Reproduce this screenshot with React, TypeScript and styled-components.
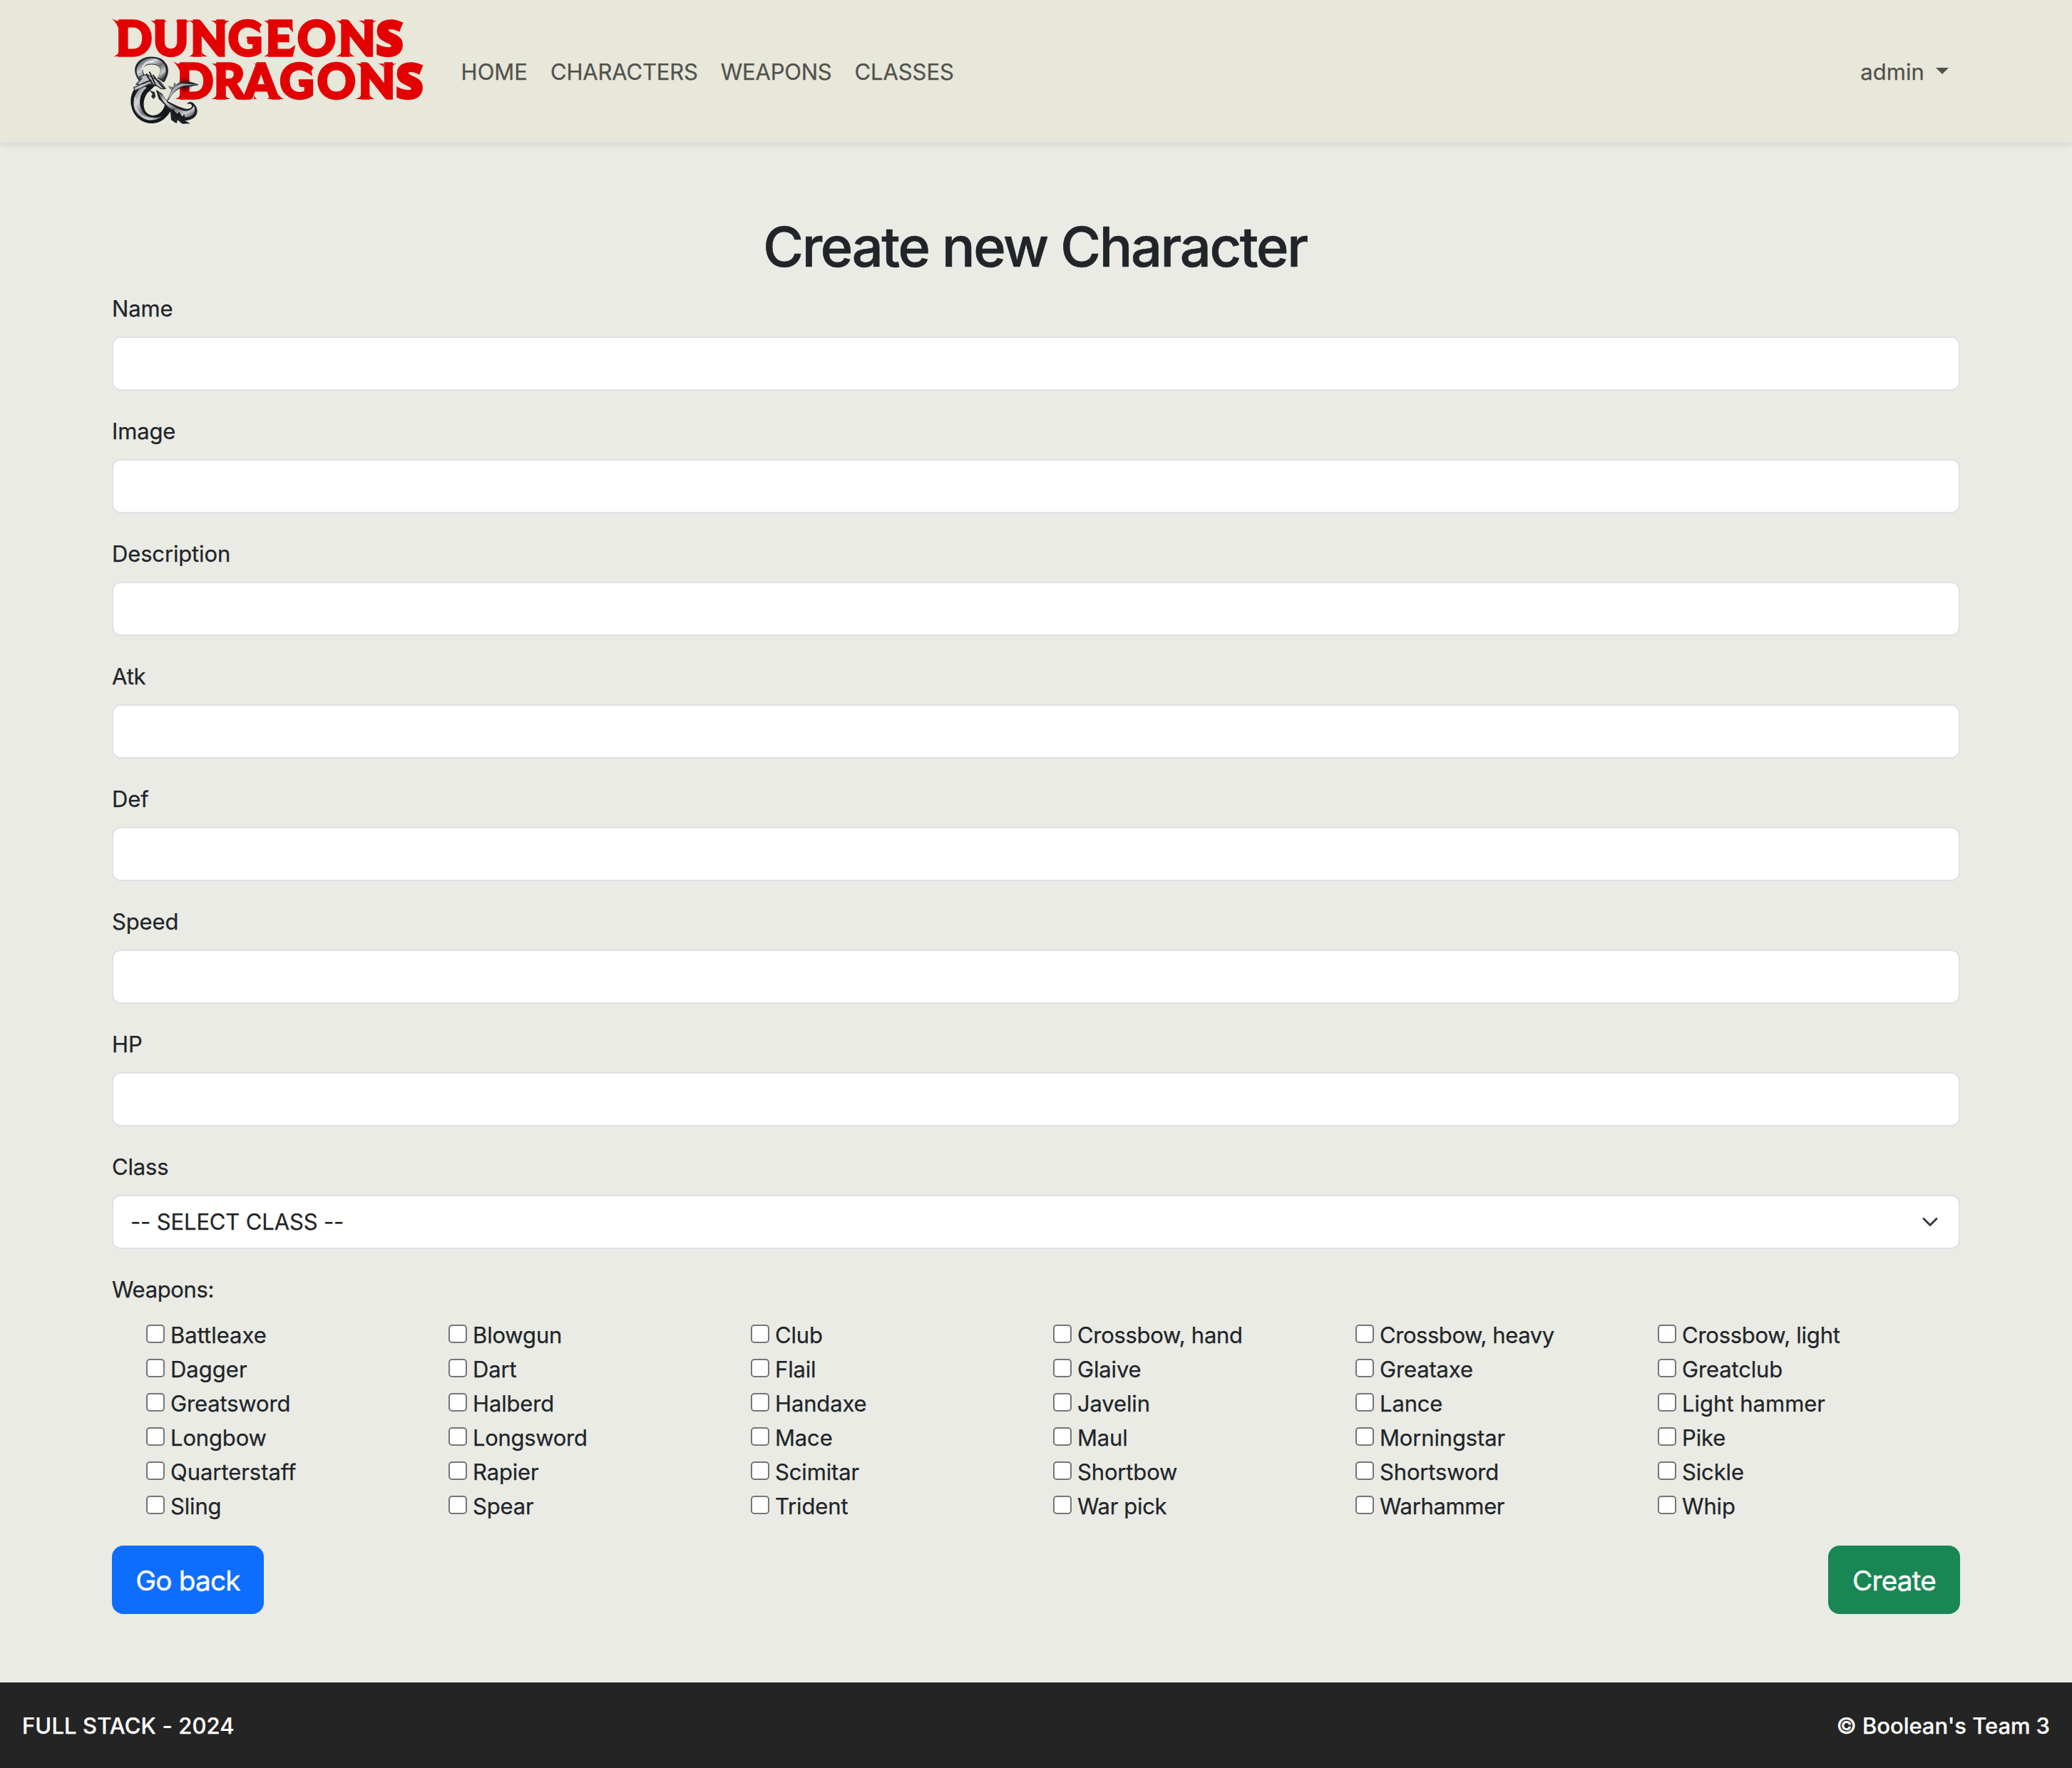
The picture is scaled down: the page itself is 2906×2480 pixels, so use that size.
import React from "react";
import styled, { createGlobalStyle } from "styled-components";

const GlobalStyle = createGlobalStyle`
  *, *::before, *::after { box-sizing: border-box; }
  body {
    margin: 0;
    background: #eaebe4;
    color: #212529;
    font-family: Inter, "Liberation Sans", sans-serif;
    font-size: 31px;
    line-height: 48px;
    letter-spacing: -0.15px;
    -webkit-text-stroke: 0.25px currentColor;
  }
`;

const Page = styled.div`
  display: flex;
  flex-direction: column;
  height: 2480px;
`;

const Container = styled.div`
  width: 2592px;
  margin: 0 auto;
`;

const Header = styled.header`
  height: 200px;
  background: #e7e7da;
  box-shadow: 0 4px 8px rgba(0, 0, 0, 0.075);
`;

const NavBar = styled(Container).attrs({ as: "nav" })`
  display: flex;
  align-items: center;
  height: 100%;
`;

const Brand = styled.a`
  display: flex;
  width: 438px;
  margin-right: 35.6px;
`;

const NavLink = styled.a<{ $tracking?: number }>`
  display: flex;
  align-items: center;
  padding: 17px 16px 15px;
  color: #52524c;
  text-decoration: none;
  letter-spacing: ${(p) => p.$tracking ?? -0.15}px;
`;

const UserMenu = styled(NavLink)`
  margin-left: auto;
`;

const Caret = styled.span`
  margin: -4px 0 0 16px;
  border-top: 9px solid currentColor;
  border-left: 9px solid transparent;
  border-right: 9px solid transparent;
`;

const Main = styled(Container).attrs({ as: "main" })`
  flex: 1;
  padding: 96px 0;
`;

const Title = styled.h1`
  margin: 0 0 14px;
  padding: 2px 3px 0 0;
  text-align: center;
  font-size: 77.5px;
  font-weight: 500;
  line-height: 96px;
  letter-spacing: -2.38px;
  -webkit-text-stroke-width: 0.6px;
`;

const Field = styled.div`
  display: flex;
  flex-direction: column;
  gap: 16px;
  margin-bottom: 32px;
`;

const Label = styled.label<{ $tracking?: number }>`
  display: block;
  height: 48px;
  padding-top: 1px;
  letter-spacing: ${(p) => p.$tracking ?? -0.15}px;
`;

const Input = styled.input`
  width: 100%;
  height: 76px;
  padding: 12px 24px;
  border: 2px solid #dee2e6;
  border-radius: 12px;
  background: #fff;
  font: inherit;
`;

const Select = styled.div`
  display: flex;
  align-items: center;
  justify-content: space-between;
  height: 76px;
  padding: 12px 24px;
  border: 2px solid #dee2e6;
  border-radius: 12px;
  background: #fff;
  cursor: pointer;
`;

const Chevron = styled.svg`
  width: 24px;
  height: 24px;
  margin-right: 4px;
`;

const WeaponGrid = styled.div`
  display: grid;
  grid-template-columns: repeat(6, 424px);
  margin-top: 16px;
  padding-left: 48px;
`;

const WeaponOption = styled.label<{ $tracking: number }>`
  display: flex;
  align-items: center;
  gap: 8px;
  height: 48px;
  letter-spacing: ${(p) => p.$tracking}px;
`;

const WeaponName = styled.span`
  padding-top: 1px;
`;

const Checkbox = styled.input`
  appearance: none;
  width: 26px;
  height: 26px;
  margin: 0 0 2px;
  border: 2px solid #767676;
  border-radius: 5px;
  background: #fff;
`;

const Actions = styled.div`
  display: flex;
  justify-content: space-between;
  margin-top: 32px;
`;

const Button = styled.button<{ $color: string; $width: number }>`
  width: ${(p) => p.$width}px;
  height: 96px;
  padding: 1px 0 0;
  border: 0;
  border-radius: 16px;
  background: ${(p) => p.$color};
  color: #fff;
  font: inherit;
  font-size: 38.75px;
  line-height: 60px;
  letter-spacing: -0.85px;
  -webkit-text-stroke: 0.4px #fff;
`;

const Footer = styled.footer`
  display: flex;
  align-items: center;
  justify-content: space-between;
  height: 120px;
  padding: 1px 31px 0;
  background: #242424;
  color: #fff;
  font-weight: 500;
`;

const FooterText = styled.span<{ $tracking: number }>`
  letter-spacing: ${(p) => p.$tracking}px;
`;

const LogoArt = styled.svg`
  display: block;
  width: 438px;
  height: 148px;
  overflow: visible;
  -webkit-text-stroke: 0;
`;

type Glyph = [string, number];
type Spur = [number, number, number, number];

const topWord: Glyph[] = [
  ["D", 68], ["U", 224], ["N", 382], ["G", 539],
  ["E", 698], ["O", 831], ["N", 1005], ["S", 1161],
];
const bottomWord: Glyph[] = [
  ["D", 326], ["R", 480], ["A", 608], ["G", 757],
  ["O", 914], ["N", 1088], ["S", 1245],
];

/* Flared stem ends: x, y, horizontal reach, vertical taper. */
const spurs: Spur[] = [
  [80, 238, -22, -24],
  [234, 87, -20, 24], [268, 87, 13, 22], [332, 87, -14, 22], [360, 87, 20, 20],
  [394, 87, -20, 20], [394, 238, -20, -22], [430, 238, 24, -24], [490, 87, -22, 22], [524, 87, 22, 24],
  [711, 87, -21, 24], [711, 238, -21, -24],
  [1018, 87, -25, 24], [1018, 238, -26, -24], [1052, 238, 22, -24], [1112, 87, -24, 22], [1143, 87, 21, 24],
  [338, 417, -20, -24],
  [492, 268, -22, 24], [492, 417, -22, -24], [526, 417, 24, -24],
  [668, 268, -20, 26], [620, 417, -24, -24], [648, 417, 14, -20], [716, 417, -12, -20], [752, 417, 22, -26],
  [1101, 268, -25, 24], [1101, 417, -26, -24], [1135, 417, 22, -24], [1195, 268, -24, 22], [1226, 268, 21, 24],
];

function Word({ glyphs, y }: { glyphs: Glyph[]; y: number }) {
  return (
    <text y={y} fill="#e20000" stroke="#e20000" strokeWidth={10} strokeLinejoin="miter" fontWeight={900} fontSize={200}>
      {glyphs.map(([char, x], i) => (
        <tspan key={i} x={x} fontFamily={char === "S" ? "Open Sans, sans-serif" : "Lato, sans-serif"}>
          {char}
        </tspan>
      ))}
    </text>
  );
}

function Logo() {
  return (
    <LogoArt viewBox="51 78 1314 444" role="img" aria-label="Dungeons & Dragons">
      <defs>
        <linearGradient id="steel" x1="0" y1="0" x2="1" y2="1">
          <stop offset="0" stopColor="#53565b" />
          <stop offset="0.3" stopColor="#d5d7da" />
          <stop offset="0.55" stopColor="#6d7075" />
          <stop offset="0.8" stopColor="#c9cbd0" />
          <stop offset="1" stopColor="#33363a" />
        </linearGradient>
        <radialGradient id="shade">
          <stop offset="0" stopColor="#100" stopOpacity="0.95" />
          <stop offset="1" stopColor="#300" stopOpacity="0" />
        </radialGradient>
      </defs>
      <Word glyphs={topWord} y={234} />
      <Word glyphs={bottomWord} y={413} />
      <g fill="#e20000">
        {spurs.map(([x, y, dx, dy], i) => (
          <path key={i} d={`M${x} ${y} h${dx} Q${x} ${y + dy * 0.35} ${x} ${y + dy}Z`} />
        ))}
        <path d="M51 78 L68 87 H120 L82 130 Q76 102 51 78Z" />
        <path d="M308 258 L324 267 H372 L340 310 Q334 282 308 258Z" />
        <path d="M808 87 L813 136 L796 118Z M812 238 L823 190 L798 206Z" />
        <path d="M650 157 H614 L638 176Z M868 337 H833 L857 356Z" />
        <path d="M668 92 L676 140 L650 122Z M886 272 L894 320 L868 302Z" />
      </g>
      <ellipse cx="358" cy="358" rx="32" ry="34" fill="url(#shade)" />
      <g transform="translate(105 216)" strokeLinejoin="round" strokeLinecap="round">
        {/* upper loop */}
        <path d="M74 116 C40 70 70 39 113 39 C158 39 184 72 151 122" fill="none" stroke="#25282c" strokeWidth="33" strokeLinecap="butt" />
        <path d="M74 112 C44 74 74 41 113 41 C154 41 176 74 150 116" fill="none" stroke="url(#steel)" strokeWidth="23" strokeLinecap="butt" />
        <path d="M74 76 C80 48 101 41 119 42" fill="none" stroke="#e6e8ea" strokeWidth="6" />
        {/* lower body */}
        <path d="M100 126 C35 135 18 190 28 232 C38 284 92 318 145 297 C178 282 195 252 204 225 L172 214 C165 248 147 269 120 270 C78 269 68 215 94 177 L130 142Z" fill="#16191c" />
        <path d="M80 145 C30 175 27 235 55 266 C80 292 126 300 158 272 C125 286 91 281 75 253 C55 220 61 176 92 153Z" fill="url(#steel)" />
        <path d="M43 197 C39 242 64 276 103 286" fill="none" stroke="#cfd1d5" strokeWidth="7" />
        {/* wing and crest */}
        <path d="M38 152 L67 139 L48 139 L72 114 L61 109 L92 96 L118 111 L149 128 L172 157 L154 158 L132 143 L104 137 L72 153 L42 165Z" fill="#b9bcc0" stroke="#303338" strokeWidth="4" />
        <path d="M91 98 L116 136 M105 88 L130 144 M119 101 L165 157 M72 137 L110 122" fill="none" stroke="#202327" strokeWidth="6" />
        <path d="M104 164 L117 180 L111 190 L121 201 L130 190 L125 171" fill="#26292d" />
        {/* raised claw */}
        <path d="M162 236 C188 201 184 158 226 134 C250 122 290 129 312 141 C284 147 266 151 246 151 C220 157 201 177 186 202Z" fill="#25282c" />
        <path d="M174 210 C194 167 209 143 238 136 L305 140 L250 144 C220 151 207 171 190 191Z" fill="#a7aaaf" />
        <path d="M193 162 L181 145 L203 151 L208 131 L223 142" fill="#777b80" />
        {/* diagonal tail */}
        <path d="M131 161 L156 178 L178 209 L217 228 C250 242 270 248 281 235 C286 226 277 216 262 222 C274 199 306 225 305 253 C303 280 277 291 253 292 L276 304 L242 305 L222 289 L218 304 L195 289 L192 255 L169 226 L143 200Z" fill="#1c1f23" />
        <path d="M140 171 L164 190 L180 216 L221 240 C251 255 278 257 291 229 C306 262 273 284 247 275 C222 267 207 248 183 234 L157 205Z" fill="url(#steel)" />
        <path d="M203 247 L220 279 L228 259 L246 288 L249 270" fill="none" stroke="#16191c" strokeWidth="7" />
      </g>
    </LogoArt>
  );
}

const navItems: [string, number][] = [
  ["HOME", 0], ["CHARACTERS", -0.17], ["WEAPONS", -0.23], ["CLASSES", -0.08],
];

const fields = ["Name", "Image", "Description", "Atk", "Def", "Speed", "HP"];

const weapons = [
  "Battleaxe", "Blowgun", "Club", "Crossbow, hand", "Crossbow, heavy", "Crossbow, light",
  "Dagger", "Dart", "Flail", "Glaive", "Greataxe", "Greatclub",
  "Greatsword", "Halberd", "Handaxe", "Javelin", "Lance", "Light hammer",
  "Longbow", "Longsword", "Mace", "Maul", "Morningstar", "Pike",
  "Quarterstaff", "Rapier", "Scimitar", "Shortbow", "Shortsword", "Sickle",
  "Sling", "Spear", "Trident", "War pick", "Warhammer", "Whip",
];

const weaponTracking: Record<string, number> = {
  Battleaxe: 0, Dagger: 0, Quarterstaff: -0.05, "Light hammer": 0,
  Longsword: -0.3, "Crossbow, light": -0.25, "Crossbow, hand": -0.3,
  "Crossbow, heavy": -0.45, Warhammer: -0.35, "War pick": -0.35,
};

export default function App() {
  return (
    <Page>
      <GlobalStyle />
      <Header>
        <NavBar>
          <Brand><Logo /></Brand>
          {navItems.map(([text, tracking]) => (
            <NavLink key={text} $tracking={tracking}>{text}</NavLink>
          ))}
          <UserMenu $tracking={0.1}>admin<Caret /></UserMenu>
        </NavBar>
      </Header>
      <Main>
        <Title>Create new Character</Title>
        {fields.map((name) => (
          <Field key={name}>
            <Label htmlFor={name}>{name}</Label>
            <Input id={name} type="text" />
          </Field>
        ))}
        <Field>
          <Label>Class</Label>
          <Select>
            <span>-- SELECT CLASS --</span>
            <Chevron viewBox="0 0 16 16">
              <path d="m2 5 6 6 6-6" fill="none" stroke="#343a40" strokeWidth="2" strokeLinecap="round" strokeLinejoin="round" />
            </Chevron>
          </Select>
        </Field>
        <Label $tracking={-0.35}>Weapons:</Label>
        <WeaponGrid>
          {weapons.map((name) => (
            <WeaponOption key={name} $tracking={weaponTracking[name] ?? -0.15}>
              <Checkbox type="checkbox" />
              <WeaponName>{name}</WeaponName>
            </WeaponOption>
          ))}
        </WeaponGrid>
        <Actions>
          <Button $color="#0d6efd" $width={213}>Go back</Button>
          <Button $color="#198754" $width={185}>Create</Button>
        </Actions>
      </Main>
      <Footer>
        <FooterText $tracking={0.1}>FULL STACK - 2024</FooterText>
        <FooterText $tracking={-0.06}>© Boolean's Team 3</FooterText>
      </Footer>
    </Page>
  );
}
